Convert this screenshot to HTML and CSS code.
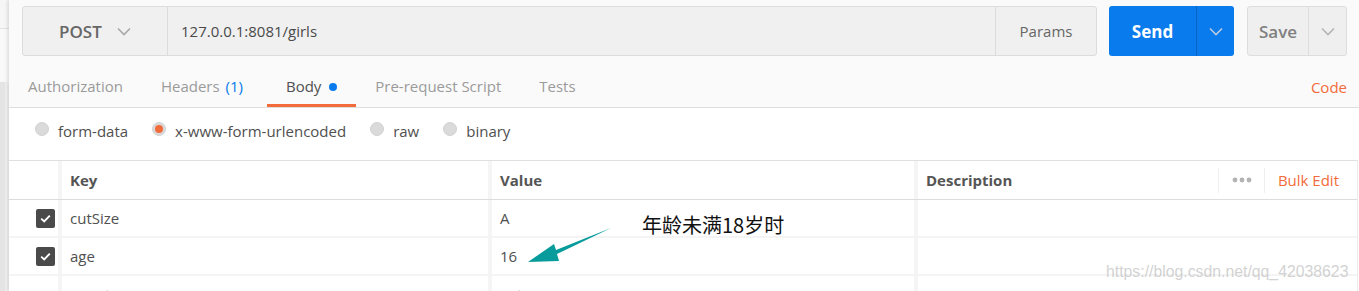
FILE: index.html
```html
<!DOCTYPE html>
<html lang="zh">
<head>
<meta charset="utf-8">
<title>Postman</title>
<link rel="stylesheet" href="styles.css">
</head>
<body>
<div class="app">
  <aside class="sidebar">
    <div class="sb-top"></div>
    <div class="sb-mid"></div>
    <div class="sb-panel"></div>
  </aside>
  <main class="main">
    <div class="urlbar">
      <div class="request">
        <div class="method">POST
          <svg class="chev" width="14" height="9" viewBox="0 0 14 9"><path d="M1 1.5 L7 7.5 L13 1.5" fill="none" stroke="#a8a8a8" stroke-width="1.6"/></svg>
        </div>
        <div class="url">127.0.0.1:8081/girls</div>
        <div class="params">Params</div>
      </div>
      <div class="send">
        <span class="send-label">Send</span>
        <span class="send-drop"><svg width="14" height="9" viewBox="0 0 14 9"><path d="M1 1.5 L7 7.5 L13 1.5" fill="none" stroke="#b8cbe0" stroke-width="1.6"/></svg></span>
      </div>
      <div class="save">
        <span class="save-label">Save</span>
        <span class="save-drop"><svg width="14" height="9" viewBox="0 0 14 9"><path d="M1 1.5 L7 7.5 L13 1.5" fill="none" stroke="#b5b5b5" stroke-width="1.6"/></svg></span>
      </div>
    </div>

    <div class="tabs">
      <div class="tab">Authorization</div>
      <div class="tab">Headers <span class="count">(1)</span></div>
      <div class="tab active">Body <span class="dot"></span></div>
      <div class="tab">Pre-request Script</div>
      <div class="tab">Tests</div>
      <div class="tab-spacer"></div>
      <div class="code">Code</div>
    </div>

    <div class="bodysec">
      <div class="radios">
        <label class="radio"><span class="circle"></span>form-data</label>
        <label class="radio"><span class="circle on"></span>x-www-form-urlencoded</label>
        <label class="radio"><span class="circle"></span>raw</label>
        <label class="radio"><span class="circle"></span>binary</label>
      </div>

      <div class="table">
        <div class="row head">
          <div class="c-check"></div>
          <div class="cell key">Key</div>
          <div class="cell val">Value</div>
          <div class="cell desc">Description
            <div class="head-actions">
              <span class="more"><svg width="20" height="6" viewBox="0 0 20 6"><circle cx="3" cy="3" r="2.4" fill="#b3b3b3"/><circle cx="10" cy="3" r="2.4" fill="#b3b3b3"/><circle cx="17" cy="3" r="2.4" fill="#b3b3b3"/></svg></span>
              <span class="bulk">Bulk Edit</span>
            </div>
          </div>
        </div>
        <div class="row">
          <div class="c-check"><span class="cb"><svg width="11" height="9" viewBox="0 0 11 9"><path d="M1.2 4.6 L4.2 7.4 L9.8 1.6" fill="none" stroke="#fff" stroke-width="1.9"/></svg></span></div>
          <div class="cell key">cutSize</div>
          <div class="cell val">A</div>
          <div class="cell desc"></div>
        </div>
        <div class="row">
          <div class="c-check"><span class="cb"><svg width="11" height="9" viewBox="0 0 11 9"><path d="M1.2 4.6 L4.2 7.4 L9.8 1.6" fill="none" stroke="#fff" stroke-width="1.9"/></svg></span></div>
          <div class="cell key">age</div>
          <div class="cell val">16</div>
          <div class="cell desc"></div>
        </div>
        <div class="row ph">
          <div class="c-check"></div>
          <div class="cell key">New key</div>
          <div class="cell val">Value</div>
          <div class="cell desc">Description</div>
        </div>
      </div>
    </div>
  </main>
</div>

<div class="note">年龄未满18岁时</div>
<svg class="arrow" width="100" height="50" viewBox="0 0 100 50">
  <polygon points="93,8 38,30 36,24 10,42 41,41 39,34" fill="#079b9b"/>
</svg>
<div class="watermark">https://blog.csdn.net/qq_42038623</div>
</body>
</html>
```

FILE: styles.css
```css
* { box-sizing: border-box; }
html, body { margin: 0; padding: 0; }
body {
  width: 1359px;
  height: 291px;
  overflow: hidden;
  background: #fafafa;
  font-family: "Open Sans", "Noto Sans", sans-serif;
  font-size: 15px;
  color: #505050;
  position: relative;
}
.app { display: flex; height: 291px; overflow: hidden; }

.sidebar {
  width: 9px;
  flex: none;
  display: flex;
  flex-direction: column;
  background: #f7f7f7;
}
.sb-top { flex: none; height: 29px; border-bottom: 1px solid #e2e2e2; background: #f6f6f6; }
.sb-mid { flex: none; height: 53px; background: #f9f9f9; }
.sb-panel {
  flex: 1;
  background: #e4e4e4;
  border-right: 4px solid #f1f1f1;
  border-top-right-radius: 2px;
}

.main {
  flex: 1;
  display: flex;
  flex-direction: column;
  background: #fafafa;
  box-shadow: -2px 0 3px rgba(0,0,0,0.10);
  position: relative;
}
.main > * { flex: none; }

/* URL bar */
.urlbar {
  display: flex;
  padding: 6px 12px 0 13px;
  height: 56px;
}
.request {
  width: 1075px;
  height: 50px;
  display: flex;
  background: #f0f0f0;
  border: 1px solid #dcdcdc;
  border-radius: 3px;
}
.method {
  width: 145px;
  display: flex;
  align-items: center;
  padding-left: 36px;
  gap: 15px;
  font-size: 17px;
  font-weight: 600;
  color: #666;
  border-right: 1px solid #dcdcdc;
}
.url {
  flex: 1;
  display: flex;
  align-items: center;
  padding-left: 13px;
  color: #4a4a4a;
}
.params {
  width: 101px;
  display: flex;
  align-items: center;
  justify-content: center;
  border-left: 1px solid #dcdcdc;
  color: #666;
}
.send {
  margin-left: 12px;
  width: 125px;
  height: 50px;
  display: flex;
  background: #097bed;
  border-radius: 3px;
  color: #fff;
}
.send-label {
  flex: 1;
  display: flex;
  align-items: center;
  justify-content: center;
  font-size: 17px;
  font-weight: 700;
}
.send-drop {
  width: 38px;
  display: flex;
  align-items: center;
  justify-content: center;
  border-left: 1px solid #0765c6;
}
.save {
  margin-left: 13px;
  width: 100px;
  height: 50px;
  display: flex;
  background: #efefef;
  border: 1px solid #dddddd;
  border-radius: 3px;
  color: #808080;
}
.save-label {
  flex: 1;
  display: flex;
  align-items: center;
  justify-content: center;
  font-size: 17px;
  font-weight: 600;
}
.save-drop {
  width: 38px;
  display: flex;
  align-items: center;
  justify-content: center;
  border-left: 1px solid #dddddd;
}

/* Tabs */
.tabs {
  display: flex;
  height: 52px;
  border-bottom: 1px solid #dedede;
}
.tab {
  padding: 20px 19px 0;
  line-height: 20px;
  color: #9b9b9b;
  border-bottom: 3px solid transparent;
  white-space: nowrap;
}
.tab .count { color: #097bed; margin-left: 2px; margin-right: 5px; }
.tab.active { color: #505050; border-bottom-color: #f26b3a; }
.dot {
  display: inline-block;
  width: 8px;
  height: 8px;
  border-radius: 50%;
  background: #097bed;
  margin-left: 4px;
  vertical-align: 1px;
}
.tab-spacer { flex: 1; }
.code {
  padding: 21px 12px 0 0;
  line-height: 20px;
  color: #f26b3a;
}

/* Body section */
.bodysec { background: #ffffff; height: 184px; }
.radios {
  display: flex;
  gap: 24px;
  height: 52px;
  align-items: center;
  padding-left: 26px;
  padding-bottom: 6px;
}
.radio {
  display: flex;
  align-items: center;
  gap: 9px;
  color: #505050;
}
.circle {
  width: 14px;
  height: 14px;
  border-radius: 50%;
  background: #dadada;
  border: 1px solid #d2d2d2;
  margin-top: -4px;
  display: flex;
  align-items: center;
  justify-content: center;
}
.circle.on::after {
  content: "";
  width: 8px;
  height: 8px;
  border-radius: 50%;
  background: #f26b3a;
}

.table {
  border-top: 1px solid #e0e0e0;
  border-right: 1px solid #ececec;
  margin-right: 1px;
}
.row {
  display: flex;
  height: 38px;
  border-bottom: 2px solid #f4f4f4;
}
.row.head {
  height: 39px;
  border-bottom: 1px solid #dcdcdc;
  font-weight: 700;
  color: #555;
}
.c-check {
  width: 49px;
  display: flex;
  align-items: center;
  justify-content: flex-end;
  padding-right: 3px;
}
.cell {
  display: flex;
  align-items: center;
  padding-left: 8px;
  border-left: 4px solid #f5f5f5;
}
.cell.key { width: 430px; }
.cell.val { width: 426px; }
.cell.desc { flex: 1; position: relative; }
.row:not(.head) .cell { color: #505050; }
.row.ph .cell { color: #d4d4d4; align-items: flex-start; padding-top: 9px; line-height: 20px; }

.head-actions {
  margin-left: auto;
  display: flex;
  align-items: center;
  height: 25px;
}
.more {
  padding: 0 12px 0 13px;
  height: 25px;
  display: flex;
  align-items: center;
  border-left: 1px solid #efefef;
  border-right: 1px solid #efefef;
}
.bulk {
  color: #f26b3a;
  font-weight: 400;
  padding: 0 18px 0 13px;
}

.cb {
  width: 19px;
  height: 19px;
  border-radius: 2px;
  background: #4a4a4a;
  display: flex;
  align-items: center;
  justify-content: center;
}

/* Annotation overlay */
.note {
  position: absolute;
  left: 642px;
  top: 211px;
  font-family: "Noto Sans CJK SC", "Microsoft YaHei", sans-serif;
  font-size: 20px;
  line-height: 28px;
  color: #111;
}
.arrow {
  position: absolute;
  left: 518px;
  top: 220px;
}
.watermark {
  position: absolute;
  left: 1106px;
  top: 262px;
  font-family: "Liberation Sans", Arial, sans-serif;
  font-size: 15.8px;
  line-height: 20px;
  color: rgba(190,190,190,0.7);
}
```
